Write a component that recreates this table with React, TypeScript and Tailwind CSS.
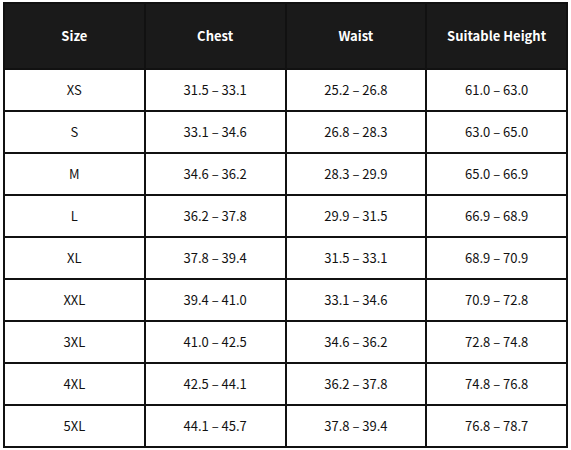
const HEAD = ["Size", "Chest", "Waist", "Suitable Height"];

const ROWS: string[][] = [
  ["XS", "31.5 – 33.1", "25.2 – 26.8", "61.0 – 63.0"],
  ["S", "33.1 – 34.6", "26.8 – 28.3", "63.0 – 65.0"],
  ["M", "34.6 – 36.2", "28.3 – 29.9", "65.0 – 66.9"],
  ["L", "36.2 – 37.8", "29.9 – 31.5", "66.9 – 68.9"],
  ["XL", "37.8 – 39.4", "31.5 – 33.1", "68.9 – 70.9"],
  ["XXL", "39.4 – 41.0", "33.1 – 34.6", "70.9 – 72.8"],
  ["3XL", "41.0 – 42.5", "34.6 – 36.2", "72.8 – 74.8"],
  ["4XL", "42.5 – 44.1", "36.2 – 37.8", "74.8 – 76.8"],
  ["5XL", "44.1 – 45.7", "37.8 – 39.4", "76.8 – 78.7"],
];

export default function App() {
  return (
    <div className="w-[571px] h-[450px] bg-white pt-[2px] pl-[3px]">
      <table
        className="w-[565px] border-collapse text-[13px] text-[#111] table-fixed"
        style={{ fontFamily: '"Noto Sans CJK KR", "Noto Sans", sans-serif' }}
      >
        <thead>
          <tr className="h-[66px] bg-[#1a1a1a]">
            {HEAD.map((h) => (
              <th key={h} className="border-2 border-[#111] text-white font-bold text-center align-middle">
                {h}
              </th>
            ))}
          </tr>
        </thead>
        <tbody>
          {ROWS.map((r) => (
            <tr key={r[0]} className="h-[42px]">
              {r.map((c, i) => (
                <td key={i} className="border-2 border-[#111] text-center align-middle">
                  {c}
                </td>
              ))}
            </tr>
          ))}
        </tbody>
      </table>
    </div>
  );
}
